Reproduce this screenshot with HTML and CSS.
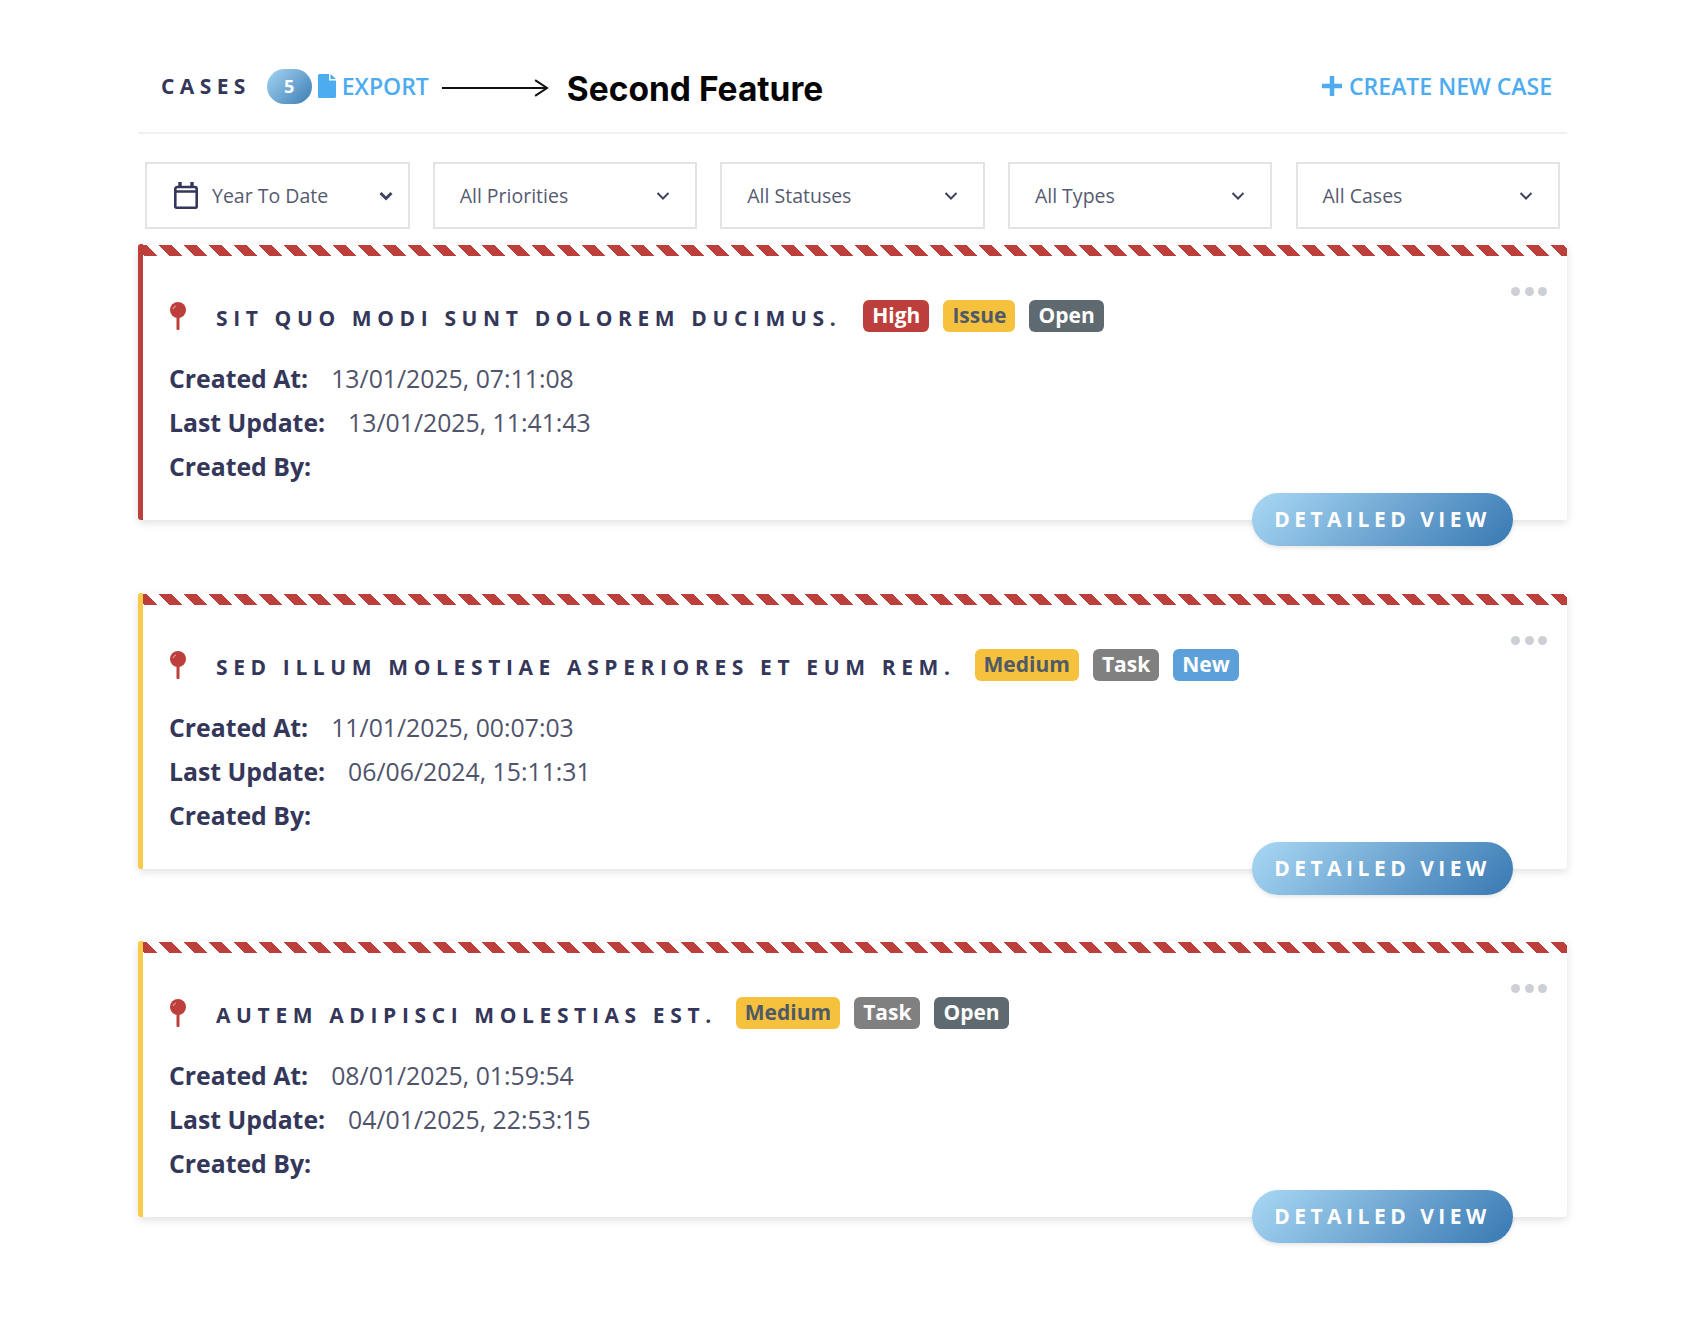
FILE: index.html
```html
<!DOCTYPE html>
<html lang="en">
<head>
<meta charset="UTF-8">
<meta name="viewport" content="width=device-width, initial-scale=1.0">
<title>Cases</title>
<link rel="stylesheet" href="styles.css">
</head>
<body>
<div class="container">
  <div class="cases-header">
    <span class="cases-title">CASES</span>
    <span class="count">5</span>
    <a class="export" href="#">
      <svg class="file-icon" viewBox="0 0 18 24"><path d="M1.5 0H11V6.5H18V22.5A1.5 1.5 0 0 1 16.500 24H1.500A1.500 1.500 0 0 1 0 22.500V1.500A1.500 1.500 0 0 1 1.500 0ZM12.500 0L18 5H12.500Z"/></svg>
      EXPORT
    </a>
    <svg class="arrow" viewBox="0 0 108 20"><path d="M0 10H106M94 2L106 10L94 18" fill="none" stroke="#111" stroke-width="2"/></svg>
    <span class="feature">Second Feature</span>
    <a class="create" href="#">
      <svg class="plus" viewBox="0 0 20 20"><path d="M10 0V20M0 10H20" fill="none" stroke="#4dabf0" stroke-width="4.500"/></svg>
      CREATE NEW CASE
    </a>
  </div>

  <div class="filters">
    <div class="filter first">
      <svg class="calendar" viewBox="0 0 24 27"><path d="M1.300 7a2 2 0 0 1 2-2h17.400a2 2 0 0 1 2 2v17.700a1 1 0 0 1-1 1H2.300a1 1 0 0 1-1-1ZM1.300 9.500H22.700" fill="none" stroke="#34375a" stroke-width="2.600"/><path d="M6 0V6M18 0V6" stroke="#34375a" stroke-width="3.400" fill="none"/></svg>
      <span>Year To Date</span>
      <svg class="chevron bold" viewBox="0 0 14 10"><path d="M1.500 2L7 7.500L12.500 2" fill="none"/></svg>
    </div>
    <div class="filter">
      <span>All Priorities</span>
      <svg class="chevron" viewBox="0 0 14 10"><path d="M1.500 2L7 7.500L12.500 2" fill="none"/></svg>
    </div>
    <div class="filter">
      <span>All Statuses</span>
      <svg class="chevron" viewBox="0 0 14 10"><path d="M1.500 2L7 7.500L12.500 2" fill="none"/></svg>
    </div>
    <div class="filter">
      <span>All Types</span>
      <svg class="chevron" viewBox="0 0 14 10"><path d="M1.500 2L7 7.500L12.500 2" fill="none"/></svg>
    </div>
    <div class="filter">
      <span>All Cases</span>
      <svg class="chevron" viewBox="0 0 14 10"><path d="M1.500 2L7 7.500L12.500 2" fill="none"/></svg>
    </div>
  </div>

  <div class="case high">
    <div class="stripes"></div>
    <div class="dots"><i></i><i></i><i></i></div>
    <div class="case-body">
      <div class="case-title">
        <svg class="pin" viewBox="0 0 18 28"><circle cx="9" cy="8" r="8" fill="#bd3f3b"/><rect x="7.500" y="14" width="3" height="14" rx="1" fill="#bd3f3b"/><path d="M4 7a5 5 0 0 1 3-3" stroke="#e9b5b2" fill="none"/></svg>
        <h2>SIT QUO MODI SUNT DOLOREM DUCIMUS.</h2>
        <span class="badge red">High</span>
        <span class="badge yellow">Issue</span>
        <span class="badge slate">Open</span>
      </div>
      <p class="meta"><b>Created At:</b><span>13/01/2025, 07:11:08</span></p>
      <p class="meta"><b>Last Update:</b><span>13/01/2025, 11:41:43</span></p>
      <p class="meta"><b>Created By:</b></p>
    </div>
    <a class="detail-btn" href="#">DETAILED VIEW</a>
  </div>

  <div class="case medium">
    <div class="stripes"></div>
    <div class="dots"><i></i><i></i><i></i></div>
    <div class="case-body">
      <div class="case-title">
        <svg class="pin" viewBox="0 0 18 28"><circle cx="9" cy="8" r="8" fill="#bd3f3b"/><rect x="7.500" y="14" width="3" height="14" rx="1" fill="#bd3f3b"/><path d="M4 7a5 5 0 0 1 3-3" stroke="#e9b5b2" fill="none"/></svg>
        <h2>SED ILLUM MOLESTIAE ASPERIORES ET EUM REM.</h2>
        <span class="badge yellow">Medium</span>
        <span class="badge grey">Task</span>
        <span class="badge blue">New</span>
      </div>
      <p class="meta"><b>Created At:</b><span>11/01/2025, 00:07:03</span></p>
      <p class="meta"><b>Last Update:</b><span>06/06/2024, 15:11:31</span></p>
      <p class="meta"><b>Created By:</b></p>
    </div>
    <a class="detail-btn" href="#">DETAILED VIEW</a>
  </div>

  <div class="case medium">
    <div class="stripes"></div>
    <div class="dots"><i></i><i></i><i></i></div>
    <div class="case-body">
      <div class="case-title">
        <svg class="pin" viewBox="0 0 18 28"><circle cx="9" cy="8" r="8" fill="#bd3f3b"/><rect x="7.500" y="14" width="3" height="14" rx="1" fill="#bd3f3b"/><path d="M4 7a5 5 0 0 1 3-3" stroke="#e9b5b2" fill="none"/></svg>
        <h2>AUTEM ADIPISCI MOLESTIAS EST.</h2>
        <span class="badge yellow">Medium</span>
        <span class="badge grey">Task</span>
        <span class="badge slate">Open</span>
      </div>
      <p class="meta"><b>Created At:</b><span>08/01/2025, 01:59:54</span></p>
      <p class="meta"><b>Last Update:</b><span>04/01/2025, 22:53:15</span></p>
      <p class="meta"><b>Created By:</b></p>
    </div>
    <a class="detail-btn" href="#">DETAILED VIEW</a>
  </div>
</div>
</body>
</html>
```

FILE: styles.css
```css
body {
  font-family: "Open Sans", "Noto Sans", sans-serif;
  background-color: #fff;
  color: #34375a;
  margin: 0;
  padding: 0;
}
a {
  text-decoration: none;
}
.container {
  width: 1429px;
  margin-left: 138px;
}

/* top bar */
.cases-header {
  display: flex;
  align-items: center;
  height: 42px;
  padding: 65px 15px 25px 23px;
  border-bottom: 2px solid #f0f0f0;
}
.cases-title {
  font-size: 21px;
  font-weight: 700;
  letter-spacing: 5.400px;
  margin-right: 16px;
}
.count {
  width: 45px;
  height: 35px;
  line-height: 35px;
  border-radius: 18px;
  text-align: center;
  color: #fff;
  font-size: 18px;
  font-weight: 700;
  background: linear-gradient(135deg, #a5d5f2, #3b7db5);
  margin-right: 6px;
}
.export {
  display: flex;
  align-items: center;
  color: #4dabf0;
  font-size: 23px;
  font-weight: 600;
}
.file-icon {
  width: 18px;
  height: 24px;
  fill: #4dabf0;
  margin-right: 6px;
}
.arrow {
  width: 107px;
  height: 20px;
  margin: 4px 18px 0 13px;
}
.feature {
  color: #050505;
  font-family: Inter, "Noto Sans", sans-serif;
  font-size: 33.500px;
  font-weight: 700;
  margin-top: 5px;
}
.create {
  display: flex;
  align-items: center;
  margin-left: auto;
  color: #4dabf0;
  font-size: 23px;
  font-weight: 600;
}
.plus {
  width: 20px;
  height: 20px;
  margin-right: 7px;
}

/* filter row */
.filters {
  display: flex;
  justify-content: space-between;
  margin: 28px 7px 15px 7px;
}
.filter {
  width: 264.500px;
  height: 67px;
  box-sizing: border-box;
  display: flex;
  align-items: center;
  padding: 0 25px 0 25px;
  border: 2px solid #e3e3e3;
  color: #565a70;
  font-size: 19.500px;
}
.filter.first {
  padding-left: 27px;
  padding-right: 15px;
}
.calendar {
  width: 24px;
  height: 27px;
  margin-right: 14px;
}
.chevron {
  width: 14px;
  height: 10px;
  margin-left: auto;
  stroke: #3f4360;
  stroke-width: 2;
}
.chevron.bold {
  stroke-width: 3;
}

/* case cards */
.case {
  position: relative;
  height: 276px;
  box-sizing: border-box;
  padding-top: 1px;
  margin-bottom: 72.500px;
  background-color: #fff;
  border-left: 5px solid #bd3f3b;
  border-radius: 3px;
  box-shadow: 0 3px 8px rgba(0, 0, 0, 0.12);
}
.case.medium {
  border-left-color: #f8cb4a;
}
.stripes {
  height: 11px;
  background: repeating-linear-gradient(45deg, #fff 0, #fff 1.400px, #bd3f3b 1.400px, #bd3f3b 10.600px, #fff 10.600px, #fff 17.570px);
}
.dots {
  position: absolute;
  top: 43px;
  right: 20px;
  display: flex;
  gap: 4.500px;
}
.dots i {
  width: 9px;
  height: 9px;
  border-radius: 50%;
  background-color: #cdcfd6;
}
.case-body {
  padding: 44px 26px 0 26px;
}
.case-title {
  display: flex;
  align-items: center;
  height: 32px;
  margin-bottom: 24px;
}
.pin {
  width: 18px;
  height: 28px;
  margin-right: 29px;
}
.case-title h2 {
  margin: 4px 19px 0 0;
  font-size: 21px;
  font-weight: 700;
  letter-spacing: 5.620px;
}
.badge {
  height: 32px;
  line-height: 31px;
  padding: 0 9px;
  margin-right: 14px;
  border-radius: 6px;
  font-size: 21px;
  font-weight: 700;
  color: #fff;
}
.badge.red {
  background-color: #bd3f3b;
  margin-left: 3px;
}
.badge.yellow {
  background-color: #f6c23e;
  color: #4f5a66;
}
.badge.slate {
  background-color: #5e6a70;
}
.badge.grey {
  background-color: #808080;
}
.badge.blue {
  background-color: #5ba0d8;
}
.meta {
  margin: 0;
  height: 44px;
  line-height: 44px;
  font-size: 24.800px;
}
.meta b {
  font-weight: 700;
}
.meta span {
  margin-left: 23px;
  color: #50536c;
}
.detail-btn {
  position: absolute;
  right: 54px;
  bottom: -26px;
  width: 261px;
  height: 53px;
  line-height: 53px;
  border-radius: 27px;
  text-align: center;
  color: #fff;
  font-size: 21px;
  font-weight: 700;
  letter-spacing: 4.500px;
  background: linear-gradient(135deg, #a9d8f4, #3878b2);
  box-shadow: 0 2px 4px rgba(0, 0, 0, 0.1);
}
```
